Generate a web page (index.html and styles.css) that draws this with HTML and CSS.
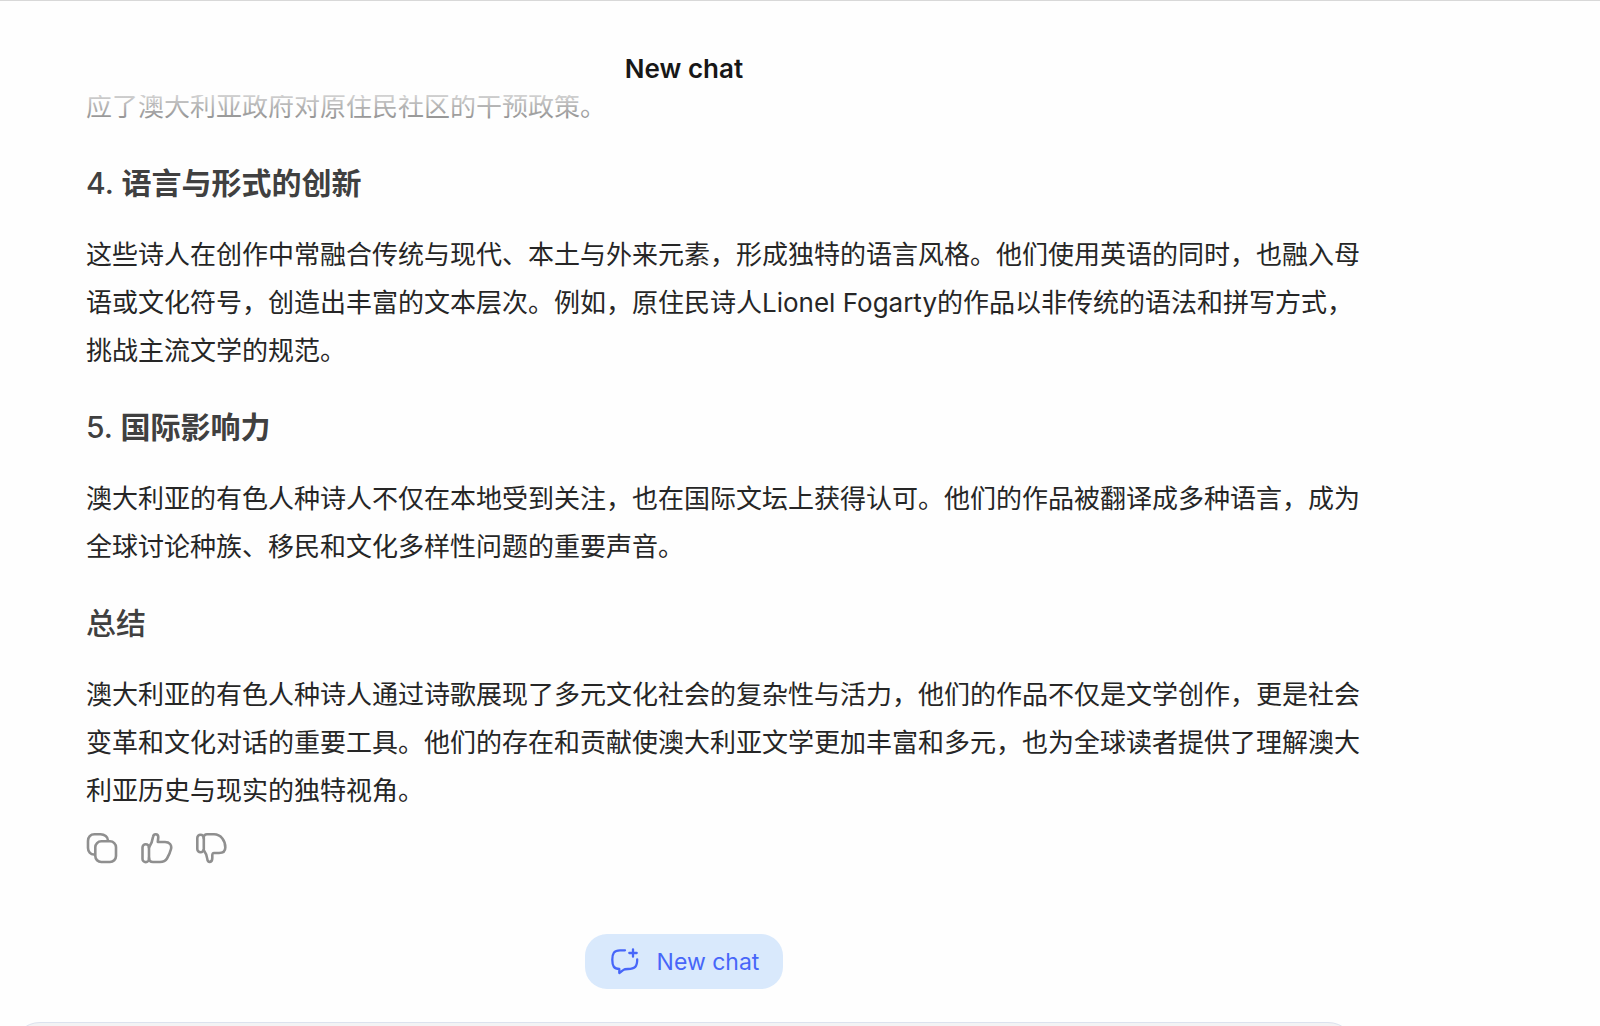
FILE: index.html
```html
<!DOCTYPE html>
<html lang="zh-CN">
<head>
    <meta charset="UTF-8">
    <meta name="viewport" content="width=device-width, initial-scale=1.0">
    <title>New chat</title>
    <link rel="stylesheet" href="styles.css">
</head>
<body>
    <div class="chat">
        <header class="chat-header">
            <h1>New chat</h1>
        </header>

        <main class="message">
            <p>应了澳大利亚政府对原住民社区的干预政策。</p>

            <h3>4. <strong>语言与形式的创新</strong></h3>
            <p>这些诗人在创作中常融合传统与现代、本土与外来元素，形成独特的语言风格。他们使用英语的同时，也融入母语或文化符号，创造出丰富的文本层次。例如，原住民诗人Lionel Fogarty的作品以非传统的语法和拼写方式，挑战主流文学的规范。</p>

            <h3>5. <strong>国际影响力</strong></h3>
            <p>澳大利亚的有色人种诗人不仅在本地受到关注，也在国际文坛上获得认可。他们的作品被翻译成多种语言，成为全球讨论种族、移民和文化多样性问题的重要声音。</p>

            <h3>总结</h3>
            <p>澳大利亚的有色人种诗人通过诗歌展现了多元文化社会的复杂性与活力，他们的作品不仅是文学创作，更是社会变革和文化对话的重要工具。他们的存在和贡献使澳大利亚文学更加丰富和多元，也为全球读者提供了理解澳大利亚历史与现实的独特视角。</p>

            <div class="actions">
                <button type="button" aria-label="Copy">
                    <svg viewBox="0 0 32 32">
                        <path d="M8 22.5C4.5 22.5 2 19.5 2 16V9C2 5 4.5 2.3 8.5 2.3H14.5C18.5 2.3 22 5 22 8.5"/>
                        <rect x="9.3" y="9.3" width="20.7" height="20.7" rx="6"/>
                    </svg>
                </button>
                <button type="button" aria-label="Like">
                    <svg viewBox="0 0 32 32">
                        <rect x="1.5" y="12.3" width="6.5" height="17.8" rx="3.2"/>
                        <path d="M8 15.5C10.5 12 11.5 8.5 12 5C12.4 1.5 17 1 17.3 5L16.8 10H24C28.5 10 31 13 30 17C29 21 27.5 24 26 26.5C24.5 29 22 30 19 30H12C9.5 30 8 28.5 8 26"/>
                    </svg>
                </button>
                <button type="button" aria-label="Dislike">
                    <svg viewBox="0 0 32 32">
                        <rect x="1.3" y="2.8" width="6.5" height="17.4" rx="3.2"/>
                        <path d="M7.7 6C7.7 3.5 9 2.3 11 2.3H18C25 2.3 29.5 9 29.3 15.5C29.3 19.5 26.5 21 23 21H18C16.5 21 16.3 22 16.3 23.5V26C16.3 31 11.5 31 11.3 27C11 23.5 9.5 20.5 7.7 18"/>
                    </svg>
                </button>
            </div>
        </main>

        <button type="button" class="new-chat">
            <svg viewBox="0 0 30 30">
                <path d="M16 3.3H11C5 3.3 3.3 6.5 3.3 12.7C3.3 19 5 22 10.3 22V26L14.5 22.8C15.5 22 16.5 22 19 22C26 22 28.2 19.5 28.2 12.5"/>
                <path d="M24 2.3V9.7M20.3 6H27.7"/>
            </svg>
            New chat
        </button>

        <div class="composer"></div>
    </div>
</body>
</html>
```

FILE: styles.css
```css
* {
    box-sizing: border-box;
}
body {
    margin: 0;
    height: 100vh;
    overflow: hidden;
    border-top: 1px solid #d8d8d8;
    background-color: #fefefe;
    color: #262626;
    font-family: Inter, "Noto Sans CJK SC", sans-serif;
}
.chat {
    display: flex;
    flex-direction: column;
    margin-right: 232px;
}
.chat-header {
    position: relative;
    z-index: 1;
    padding: 48px 0 6px;
    background-color: #fefefe;
    text-align: center;
}
.chat-header::after {
    content: "";
    position: absolute;
    top: 100%;
    left: 0;
    right: 0;
    height: 64px;
    background: linear-gradient(rgba(254, 254, 254, 0.8), rgba(254, 254, 254, 0));
}
h1 {
    margin: 0;
    font-size: 26px;
    line-height: 40px;
    font-weight: 600;
    color: #171717;
}
.message {
    margin-top: -12px;
    padding: 0 4px 0 86px;
}
.message p {
    margin: 0;
    font-size: 26px;
    line-height: 48px;
}
.message h3 {
    margin: 32px 0 28px;
    font-size: 30px;
    line-height: 40px;
    font-weight: 500;
    color: #404040;
}
.message strong {
    font-weight: 700;
}
button {
    border: none;
    padding: 0;
    background: none;
    font-family: inherit;
    cursor: pointer;
}
svg {
    display: block;
    fill: none;
    stroke: currentColor;
    stroke-width: 2.6;
    stroke-linejoin: round;
    stroke-linecap: round;
}
.actions {
    display: flex;
    gap: 23px;
    margin-top: 17px;
}
.actions button {
    color: #8f8f8f;
}
.actions svg {
    width: 32px;
    height: 32px;
}
.new-chat {
    display: flex;
    align-items: center;
    align-self: center;
    gap: 18px;
    height: 55px;
    margin: 70px 0 33px;
    padding: 0 24px;
    border-radius: 22px;
    background-color: #d9e9fc;
    color: #4766f9;
    font-size: 23px;
}
.new-chat svg {
    width: 30px;
    height: 30px;
    stroke-width: 2.3;
}
.composer {
    height: 120px;
    margin: 0 12px;
    border: 1px solid #dce2ee;
    border-radius: 28px;
    background-color: #f3f3f4;
}
```
